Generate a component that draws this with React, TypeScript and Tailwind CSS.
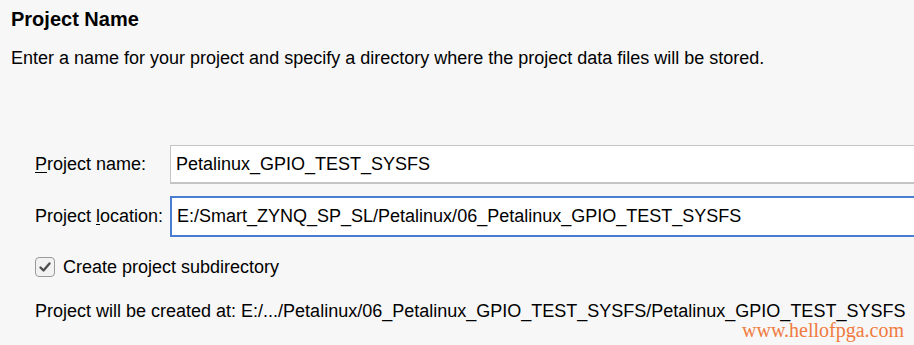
import React from 'react';

const font = { fontFamily: '"Liberation Sans", Arial, sans-serif' };

function Field({
  label,
  accessKey,
  value,
  focused = false,
}: {
  label: [string, string, string];
  accessKey?: string;
  value: string;
  focused?: boolean;
}) {
  return (
    <div className="flex items-center">
      <label className="w-[135px] shrink-0 text-[18px] text-black">
        {label[0]}
        <span className="underline underline-offset-2">{label[1]}</span>
        {label[2]}
      </label>
      <input
        readOnly
        value={value}
        accessKey={accessKey}
        className={`-mr-4 min-w-0 flex-1 bg-white pl-[5px] text-[18px] text-black outline-none ${
          focused
            ? 'h-[41px] border-2 border-[#4a7ccf]'
            : 'h-[39px] border border-[#c4c4c4] border-b-2'
        }`}
        style={font}
      />
    </div>
  );
}

export default function App() {
  return (
    <div
      className="h-[345px] w-[914px] overflow-hidden bg-[#f7f7f7] text-black"
      style={font}
    >
      <div className="pl-[11px] pt-[6px]">
        <h1 className="text-[20px] font-bold leading-[26px]">Project Name</h1>
        <p className="mt-[15px] text-[18px] leading-[22px]">
          Enter a name for your project and specify a directory where the project data files will be stored.
        </p>
      </div>

      <div className="mt-[76px] flex flex-col pl-[35px]">
        <Field label={['', 'P', 'roject name:']} value="Petalinux_GPIO_TEST_SYSFS" />
        <div className="mt-[12px]">
          <Field
            label={['Project ', 'l', 'ocation:']}
            value="E:/Smart_ZYNQ_SP_SL/Petalinux/06_Petalinux_GPIO_TEST_SYSFS"
            focused
          />
        </div>

        <div className="mt-[19px] flex items-center gap-[8px]">
          <span className="flex h-[20px] w-[20px] items-center justify-center rounded-[4px] border-[1.5px] border-[#9a9a9a] bg-[#f2f2f2]">
            <svg width="14" height="14" viewBox="0 0 14 14" fill="none">
              <path
                d="M2.5 7.5 L5.5 10.5 L11.5 3.5"
                stroke="#505050"
                strokeWidth="2.4"
                strokeLinecap="round"
                strokeLinejoin="round"
              />
            </svg>
          </span>
          <span className="text-[18px] leading-[22px]">Create project subdirectory</span>
        </div>

        <p className="mt-[22px] whitespace-nowrap text-[18px] leading-[22px]">
          Project will be created at: E:/.../Petalinux/06_Petalinux_GPIO_TEST_SYSFS/Petalinux_GPIO_TEST_SYSFS
        </p>
      </div>

      <div className="-mt-[3px] flex justify-end pr-[10px]">
        <span
          className="text-[20px] leading-[22px] text-[#f07b3f]"
          style={{ fontFamily: '"Liberation Serif", "Times New Roman", serif' }}
        >
          www.hellofpga.com
        </span>
      </div>
    </div>
  );
}
